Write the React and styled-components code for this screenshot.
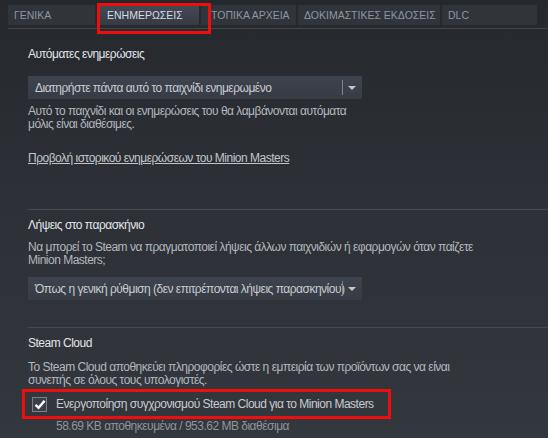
import React from 'react';
import styled, { createGlobalStyle } from 'styled-components';

const GlobalStyle = createGlobalStyle`
  html, body {
    margin: 0;
    padding: 0;
    background: #2a2d33;
  }
  * {
    box-sizing: border-box;
  }
`;

const Page = styled.div`
  width: 548px;
  height: 438px;
  overflow: hidden;
  background: linear-gradient(180deg, #25282d 0%, #2d3036 45%, #33373e 100%);
  font-family: Arial, 'Liberation Sans', sans-serif;
  font-size: 12px;
  letter-spacing: -0.5px;
  color: #b6bbc0;
`;

const TabBar = styled.div`
  display: flex;
  gap: 2px;
  margin: 0 0 0 8px;
  padding: 5px 0 3px 0;
  border-bottom: 1px solid #41454c;
`;

const Tab = styled.div`
  position: relative;
  flex: none;
  height: 20px;
  width: ${(p) => p.w}px;
  padding-left: ${(p) => p.pl || 6}px;
  display: flex;
  align-items: center;
  font-size: 10.5px;
  letter-spacing: 0;
  white-space: nowrap;
  color: ${(p) => (p.active ? '#d3dbe6' : '#8e96a1')};
  background: ${(p) =>
    p.active
      ? 'linear-gradient(180deg, #454b56 0%, #353a43 100%)'
      : '#30343b'};
`;

const Highlight = styled.div`
  position: absolute;
  top: ${(p) => p.t}px;
  right: ${(p) => p.r}px;
  bottom: ${(p) => p.b}px;
  left: ${(p) => p.l}px;
  border: 3px solid #f20d0d;
  pointer-events: none;
  z-index: 1;
`;

const Content = styled.div`
  padding-left: 28px;
`;

const Section = styled.div`
  padding-top: ${(p) => p.pt}px;
  padding-bottom: ${(p) => p.pb || 0}px;
  border-bottom: ${(p) => (p.last ? 'none' : '1px solid #464a51')};
`;

const Heading = styled.div`
  color: #e2e5e8;
  line-height: 14px;
`;

const Text = styled.div`
  line-height: 13px;
  margin-top: ${(p) => p.mt || 0}px;
  color: ${(p) => p.color || '#b3b8bf'};
`;

const Select = styled.div`
  position: relative;
  width: 334px;
  height: 23px;
  margin-top: ${(p) => p.mt}px;
  padding-left: 7px;
  display: flex;
  align-items: center;
  white-space: nowrap;
  color: #c9ccd0;
  background: linear-gradient(180deg, #3e444f 0%, #363b44 100%);
`;

const SelectDivider = styled.div`
  position: absolute;
  left: 314px;
  top: 4px;
  bottom: 4px;
  width: 1px;
  background: #7d838c;
`;

const SelectArrow = styled.div`
  position: absolute;
  left: 320px;
  top: 10px;
  width: 0;
  height: 0;
  border-left: 4px solid transparent;
  border-right: 4px solid transparent;
  border-top: 4px solid #c3c7cc;
`;

const Link = styled.a`
  display: inline-block;
  margin-top: 21px;
  color: #c2c6cb;
  text-decoration: underline;
  line-height: 13px;
`;

const CheckRow = styled.div`
  display: inline-flex;
  align-items: center;
  gap: 9px;
  margin-top: 2px;
  margin-left: -6px;
  height: 30px;
  padding: 0 14px 0 7px;
  border: 3px solid #f20d0d;
  color: #c8ccd1;
`;

const Box = styled.div`
  width: 15px;
  height: 15px;
  display: flex;
  align-items: center;
  justify-content: center;
  border: 1px solid #7b8088;
  background: #3b4048;
`;

const Storage = styled.div`
  padding-left: 28px;
  line-height: 13px;
  margin-top: 1px;
  color: #8f959c;
`;

const tabs = [
  { label: 'ΓΕΝΙΚΑ', w: 87 },
  { label: 'ΕΝΗΜΕΡΩΣΕΙΣ', w: 102, active: true, pl: 10 },
  { label: 'ΤΟΠΙΚΑ ΑΡΧΕΙΑ', w: 95, pl: 10 },
  { label: 'ΔΟΚΙΜΑΣΤΙΚΕΣ ΕΚΔΟΣΕΙΣ', w: 142 },
  { label: 'DLC', w: 95 },
];

const Dropdown = ({ mt, children }) => (
  <Select mt={mt}>
    {children}
    <SelectDivider />
    <SelectArrow />
  </Select>
);

const App = () => (
  <>
    <GlobalStyle />
    <Page>
      <TabBar>
        {tabs.map((t) => (
          <Tab key={t.label} w={t.w} pl={t.pl} active={t.active}>
            {t.label}
            {t.active && <Highlight t={-2} r={-12} b={-9} l={0} />}
          </Tab>
        ))}
      </TabBar>

      <Content>
        <Section pt={18} pb={44}>
          <Heading>Αυτόματες ενημερώσεις</Heading>
          <Dropdown mt={15}>Διατηρήστε πάντα αυτό το παιχνίδι ενημερωμένο</Dropdown>
          <Text mt={6}>
            Αυτό το παιχνίδι και οι ενημερώσεις του θα λαμβάνονται αυτόματα
            <br />
            μόλις είναι διαθέσιμες.
          </Text>
          <Link>Προβολή ιστορικού ενημερώσεων του Minion Masters</Link>
        </Section>

        <Section pt={8} pb={27}>
          <Heading>Λήψεις στο παρασκήνιο</Heading>
          <Text mt={9}>
            Να μπορεί το Steam να πραγματοποιεί λήψεις άλλων παιχνιδιών ή εφαρμογών όταν παίζετε
            <br />
            Minion Masters;
          </Text>
          <Dropdown mt={10}>Όπως η γενική ρύθμιση (δεν επιτρέπονται λήψεις παρασκηνίου)</Dropdown>
        </Section>

        <Section pt={8} last>
          <Heading>Steam Cloud</Heading>
          <Text mt={11}>
            Το Steam Cloud αποθηκεύει πληροφορίες ώστε η εμπειρία των προϊόντων σας να είναι
            <br />
            συνεπής σε όλους τους υπολογιστές.
          </Text>
          <CheckRow>
            <Box>
              <svg width="12" height="11" viewBox="0 0 12 11">
                <path d="M1.5 5.8 L4.6 8.8 L10.6 1.8" fill="none" stroke="#ffffff" strokeWidth="2.4" />
              </svg>
            </Box>
            Ενεργοποίηση συγχρονισμού Steam Cloud για το Minion Masters
          </CheckRow>
          <Storage>58.69 KB αποθηκευμένα / 953.62 MB διαθέσιμα</Storage>
        </Section>
      </Content>
    </Page>
  </>
);

export default App;
